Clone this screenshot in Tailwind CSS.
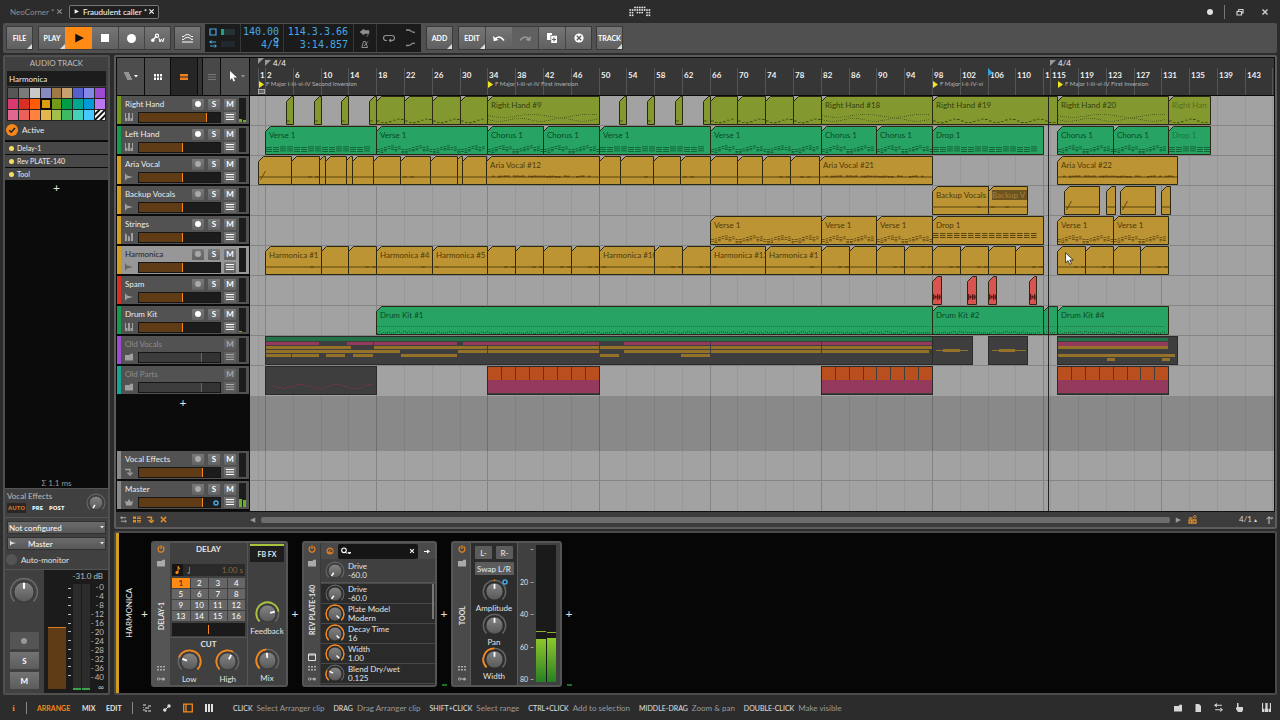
<!DOCTYPE html>
<html lang="en">
<head>
<meta charset="utf-8">
<meta name="viewport" content="width=device-width, initial-scale=1">
<title>Fraudulent caller</title>
<script src="https://cdn.jsdelivr.net/npm/@tailwindcss/browser@4"></script>
</head>
<body class="flex h-screen min-h-[700px] flex-col overflow-hidden bg-[#2c2c2c] font-['Lato',sans-serif] text-[8px] leading-[10px] text-[#e2e2e2]">

<svg class="absolute size-0" aria-hidden="true">
  <defs>
    <linearGradient id="cap" x1="0" y1="0" x2="0" y2="1"><stop offset="0" stop-color="#858585"/><stop offset="1" stop-color="#585858"/></linearGradient>
    <pattern id="hatch" width="4" height="4" patternUnits="userSpaceOnUse" patternTransform="rotate(45)"><rect width="4" height="4" fill="#111"/><rect width="2" height="4" fill="#fff"/></pattern>
  </defs>
  <symbol id="i-x" viewBox="0 0 8 8"><path d="M1.500 1.500 6.500 6.500M6.500 1.500 1.500 6.500" stroke="currentColor" stroke-width="1.400"/></symbol>
  <symbol id="i-play" viewBox="0 0 8 8"><path d="M1 .5 8 4 1 7.500z" fill="currentColor"/></symbol>
  <symbol id="i-wave" viewBox="0 0 8 8"><path d="M0 0 2 2.500 8 4 2 5.500 0 8z" fill="currentColor"/></symbol>
  <symbol id="i-keys" viewBox="0 0 8 8"><path d="M0 0h1v5h1v3H0zM3 0v5h-.5v3h3V5H5V0zM7 0h1v8H6V5h1z" fill="currentColor"/></symbol>
  <symbol id="i-hybrid" viewBox="0 0 8 8"><path d="M0 0 2 2v6H0zM3 2.500 5 4v4H3zM6 0h2v8H6z" fill="currentColor"/></symbol>
  <symbol id="i-folder" viewBox="0 0 8 8"><path d="M0 2h4.500L5.500 .8H8v6.700H0z" fill="currentColor"/></symbol>
  <symbol id="i-crown" viewBox="0 0 8 8"><path d="M0 2.500 2 4 4 1l2 3 2-1.500L7 7.500H1z" fill="currentColor"/></symbol>
  <symbol id="i-return" viewBox="0 0 8 8"><path d="M0 1.500h5v4M2.500 4.500 5 7l2.500-2.500" fill="none" stroke="currentColor" stroke-width="1.300"/></symbol>
  <symbol id="i-power" viewBox="0 0 8 8"><path d="M2.500 1.500a3 3 0 1 0 3 0M4 .3v3.700" fill="none" stroke="currentColor" stroke-width="1.100"/></symbol>
  <symbol id="i-dots" viewBox="0 0 8 6"><path d="M0 1h2v1.500H0zM3 1h2v1.500H3zM6 1h2v1.500H6zM0 4h2v1.500H0zM3 4h2v1.500H3zM6 4h2v1.500H6z" fill="currentColor"/></symbol>
  <symbol id="i-link" viewBox="0 0 8 6"><circle cx="1.600" cy="3" r="1.200" fill="none" stroke="currentColor"/><path d="M3 3h2" stroke="currentColor"/><circle cx="6.400" cy="3" r="1.600" fill="currentColor"/></symbol>
  <symbol id="i-arrows" viewBox="0 0 8 8"><path d="M2.500 0v4L0 2zM5.500 4v4L8 6zM2 1.500h5v1H2zM1 5.500h5v1H1z" fill="currentColor"/></symbol>
  <symbol id="i-menu" viewBox="0 0 8 8"><path d="M0 1h8v1H0zM0 3.500h8v1H0zM0 6h8v1H0z" fill="currentColor"/></symbol>
  <symbol id="i-tri" viewBox="0 0 4 4"><path d="M4 0v4H0z" fill="currentColor"/></symbol>
  <symbol id="i-down" viewBox="0 0 4 3"><path d="M0 0h4L2 2.500z" fill="currentColor"/></symbol>
</svg>

<!-- Project tabs and window controls -->
<header class="flex h-[23px] shrink-0 items-center text-[#8f8f8f]">
  <div class="flex flex-1 items-center">
    <button class="ml-[10px] w-[41px] text-left whitespace-nowrap">NeoCorner *</button>
    <button class="ml-[5px]" aria-label="Close NeoCorner"><svg class="size-[7px]"><use href="#i-x"/></svg></button>
    <div class="ml-[6px] flex h-[14px] w-[90px] items-center rounded-[2px] border border-[#777] bg-[#1f1f1f] text-[#f2f2f2]">
      <svg class="ml-[4px] size-[5px]"><use href="#i-play"/></svg>
      <button class="ml-[4px] w-[62px] text-left font-medium whitespace-nowrap">Fraudulent caller *</button>
      <button class="ml-[3px]" aria-label="Close Fraudulent caller"><svg class="size-[7px]"><use href="#i-x"/></svg></button>
    </div>
  </div>
  <svg class="h-[11px] w-[22px] fill-[#dcdcdc]" viewBox="0 0 22 11" id="logo" aria-label="Bitwig"></svg>
  <div class="flex flex-1 items-center justify-end gap-[11px] text-[#d0d0d0]">
    <span class="size-[6px] rounded-full bg-[#e0e0e0]"></span>
    <span class="h-[14px] w-px bg-[#777]"></span>
    <button aria-label="Restore"><svg class="size-[8px]" viewBox="0 0 8 8"><path d="M2.500 1.500h4.500v3.500H5.500M2.500 1.500v1.500" fill="none" stroke="currentColor" stroke-width="1.200"/><path d="M1 3.500h4.500v3.500H1z" fill="none" stroke="currentColor" stroke-width="1.200"/></svg></button>
    <button class="mr-[11px] ml-[6px]" aria-label="Close"><svg class="size-[8px]"><use href="#i-x"/></svg></button>
  </div>
</header>

<!-- Transport -->
<nav class="mx-[3px] flex h-[30px] shrink-0 items-center rounded-[2px] bg-[#505050] pl-[3px] text-[7px] font-bold text-white">
  <button class="relative h-[24px] w-[27px] border border-[#3a3a3a] bg-linear-to-b from-[#767676] to-[#606060]">FILE<svg class="absolute right-0 bottom-0 size-[5px] text-[#ddd]"><use href="#i-tri"/></svg></button>
  <div class="ml-[5px] flex h-[24px] border border-[#3a3a3a]">
    <button class="relative w-[26px] bg-linear-to-b from-[#767676] to-[#606060]">PLAY<svg class="absolute right-0 bottom-0 size-[5px] text-[#ddd]"><use href="#i-tri"/></svg></button>
    <button class="flex w-[27px] items-center justify-center bg-[#ff8a14] text-[#111]" aria-label="Play"><svg class="size-[10px]"><use href="#i-play"/></svg></button>
    <button class="flex w-[26px] items-center justify-center bg-linear-to-b from-[#767676] to-[#606060]" aria-label="Stop"><span class="size-[8px] bg-white"></span></button>
    <button class="flex w-[26px] items-center justify-center border-l border-[#444] bg-linear-to-b from-[#767676] to-[#606060]" aria-label="Record"><span class="size-[9px] rounded-full bg-white"></span></button>
    <button class="flex w-[26px] items-center justify-center border-l border-[#444] bg-linear-to-b from-[#767676] to-[#606060]" aria-label="Automation write"><svg class="h-[10px] w-[14px]" viewBox="0 0 14 10"><path d="M1.500 7.500 5.500 3" stroke="#fff" stroke-width="1.200"/><circle cx="1.800" cy="7.300" r="1.700" fill="#fff"/><circle cx="6" cy="2.800" r="1.600" fill="none" stroke="#fff" stroke-width="1.200"/><path d="M8 5l1 4 1.400-3L11.800 9l1.200-4" fill="none" stroke="#fff"/></svg></button>
  </div>
  <button class="ml-[3px] flex h-[24px] w-[27px] items-center justify-center border border-[#3a3a3a] bg-linear-to-b from-[#767676] to-[#606060]" aria-label="Overdub"><svg class="h-[9px] w-[11px]" viewBox="0 0 11 9"><path d="M0 2.500h2q1-2 3.500-2t3.500 2h2M0 5.300h2q1-2 3.500-2t3.500 2h2M0 8h11" fill="none" stroke="#fff"/></svg></button>

  <div class="ml-[4px] flex h-[28px] bg-[#1b1b1b] font-['DejaVu_Sans_Mono',monospace] text-[10px] leading-[13px] font-normal text-[#48a8e2]">
    <div class="grid w-[35px] grid-cols-2 items-center gap-y-px py-[2px] pl-[4px]">
      <svg class="size-[8px]" viewBox="0 0 8 8"><path d="M1 1h6v6H1z" fill="none" stroke="currentColor" stroke-width="1.200"/></svg><span class="-ml-[4px] h-[6px] w-[14px] border-l-[3px] border-[#1ba38c] bg-[#233236]"></span>
      <svg class="size-[8px]"><use href="#i-arrows"/></svg><span class="-ml-[4px] h-[6px] w-[14px] bg-[#22292e]"></span>
    </div>
    <div class="flex w-[44px] flex-col items-end border-x border-[#383838] pt-[1px] pr-[4px]"><span>140.00</span><span class="relative">4/4<svg class="absolute -top-[1px] right-0 size-[6px]" viewBox="0 0 6 6"><circle cx="3" cy="3" r="2" fill="#1b1b1b" stroke="currentColor" stroke-width="1.300"/></svg></span></div>
    <div class="flex w-[70px] flex-col items-end border-r border-[#383838] pt-[1px] pr-[5px]"><span>114.3.3.66</span><span>3:14.857</span></div>
    <div class="flex w-[23px] flex-col items-center justify-center gap-[4px] border-r border-[#383838] text-[#8f8f8f]">
      <svg class="h-[8px] w-[10px]" viewBox="0 0 10 8"><path d="M0 3 4 0v1.500h5v3H4V6zM8 4v3M6 7h2" fill="currentColor" stroke="currentColor" stroke-width=".6"/></svg>
      <svg class="h-[7px] w-[8px]" viewBox="0 0 8 7"><path d="M2.500.5h2L6.500 6.500H.8zM3 5 7 .5" fill="none" stroke="currentColor"/></svg>
    </div>
    <div class="flex w-[44px] items-center justify-around text-[#8f8f8f]">
      <svg class="h-[8px] w-[12px]" viewBox="0 0 12 8"><path d="M4 6.500H3a2.500 2.500 0 0 1 0-5h6a2.500 2.500 0 0 1 0 5H6.500M8 5 6.500 6.500 8 8" fill="none" stroke="currentColor" stroke-width="1.200"/></svg>
      <svg class="h-[20px] w-[9px]" viewBox="0 0 9 20"><path d="M0 2h2q2 0 3 1.200T9 4.500M0 17.500h2q2 0 3-1.200t4-1.200" fill="none" stroke="currentColor" stroke-width="1.300"/></svg>
    </div>
  </div>

  <button class="relative ml-[5px] h-[24px] w-[27px] border border-[#3a3a3a] bg-linear-to-b from-[#767676] to-[#606060]">ADD<svg class="absolute right-0 bottom-0 size-[5px] text-[#ddd]"><use href="#i-tri"/></svg></button>
  <div class="ml-[5px] flex h-[24px] border border-[#3a3a3a]">
    <button class="relative w-[26px] bg-linear-to-b from-[#767676] to-[#606060]">EDIT<svg class="absolute right-0 bottom-0 size-[5px] text-[#ddd]"><use href="#i-tri"/></svg></button>
    <button class="flex w-[27px] items-center justify-center border-l border-[#444] bg-linear-to-b from-[#767676] to-[#606060]" aria-label="Undo"><svg class="h-[8px] w-[12px]" viewBox="0 0 12 8"><path d="M2 5.500Q6 0 11 6.500" fill="none" stroke="#fff" stroke-width="1.500"/><path d="M0 2 .8 7.200 5.500 6z" fill="#fff"/></svg></button>
    <button class="flex w-[26px] items-center justify-center bg-[#606060]" aria-label="Redo"><svg class="h-[8px] w-[12px]" viewBox="0 0 12 8"><path d="M10 5.500Q6 0 1 6.500" fill="none" stroke="#999" stroke-width="1.500"/><path d="M12 2 11.200 7.200 6.500 6z" fill="#999"/></svg></button>
    <button class="flex w-[27px] items-center justify-center border-l border-[#444] bg-linear-to-b from-[#767676] to-[#606060]" aria-label="Duplicate"><svg class="size-[10px]" viewBox="0 0 10 10"><path d="M0 0h5v2H3.500v5H0z" fill="#fff"/><path d="M4.200 2.800H10V10H4.200z" fill="#fff"/><path d="M7 4.500v4M5 6.500h4" stroke="#666" stroke-width="1.200"/></svg></button>
    <button class="flex w-[26px] items-center justify-center border-l border-[#444] bg-linear-to-b from-[#767676] to-[#606060]" aria-label="Delete"><svg class="size-[10px]" viewBox="0 0 10 10"><circle cx="5" cy="5" r="4.600" fill="#fff"/><path d="M2.800 2.800l4.400 4.400M7.200 2.800 2.800 7.200" stroke="#555" stroke-width="1.300"/></svg></button>
  </div>
  <button class="relative ml-[4px] flex h-[24px] w-[27px] items-center justify-center border border-[#3a3a3a] bg-linear-to-b from-[#767676] to-[#606060]">TRACK<svg class="absolute right-0 bottom-0 size-[5px] text-[#ddd]"><use href="#i-tri"/></svg></button>
</nav>

<main class="flex min-h-0 flex-1 gap-[4px] px-[3px] py-[2px]">

  <!-- Inspector -->
  <aside class="flex w-[107px] shrink-0 flex-col rounded-[2px] border-2 border-[#505050] bg-[#404040]">
    <h2 class="pt-px text-center text-[#bdbdbd]">AUDIO TRACK</h2>
    <div class="px-[2px] pt-[3px]">
      <input aria-label="Track name" value="Harmonica" class="block h-[15px] w-full bg-[#1c1c1c] px-[2px] text-[#ececec]">
      <div id="palette" class="mt-px grid grid-cols-9 gap-px border border-[#222] bg-[#222]"></div>
    </div>
    <label class="mb-[2px] flex h-[17px] items-center gap-[4px] pl-[1px] text-[#ececec]">
      <span class="relative flex size-[12px]"><input type="checkbox" checked class="size-[12px] appearance-none rounded-full bg-[#f5871b]"><svg class="absolute inset-0 size-[12px]" viewBox="0 0 12 12"><path d="M3.200 6.200 5.200 8.200 9 4" fill="none" stroke="#222" stroke-width="1.600"/></svg></span>Active</label>
    <ul class="flex flex-1 flex-col gap-px border-t-2 border-[#0b0b0b] bg-[#0b0b0b]">
      <li class="flex h-[12px] items-center gap-[3px] bg-[#474747] pl-[4px] text-[7px] font-medium"><i class="size-[5px] rounded-full bg-[#f6dd5d]"></i>Delay-1</li>
      <li class="flex h-[12px] items-center gap-[3px] bg-[#474747] pl-[4px] text-[7px] font-medium"><i class="size-[5px] rounded-full bg-[#f6dd5d]"></i>Rev PLATE-140</li>
      <li class="flex h-[12px] items-center gap-[3px] bg-[#474747] pl-[4px] text-[7px] font-medium"><i class="size-[5px] rounded-full bg-[#f6dd5d]"></i>Tool</li>
      <li class="flex justify-center pt-[2px]"><button aria-label="Add device" class="text-[12px] leading-[10px]">+</button></li>
      <li class="mt-auto text-center text-[#9a9a9a]">Σ 1.1 ms</li>
    </ul>
    <div class="flex h-[30px] justify-between border-y border-[#555] pl-[2px]">
      <div><div class="pt-[2px] text-[#bcbcbc]">Vocal Effects</div>
        <div class="mt-[2px] flex items-center font-['Open_Sans',sans-serif] text-[6px] font-bold text-white"><button class="mr-[3px] bg-[#2c2523] px-px text-[#d77a24]">AUTO</button><button class="px-[3px]">PRE</button><button class="px-[3px]">POST</button></div></div>
      <label data-knob="0,0,-150,#888" class="relative mt-[4px] mr-[2px] size-[20px]"></label>
    </div>
    <div class="flex flex-col gap-[3px] px-[2px] pt-[3px]">
      <label class="relative block"><select aria-label="Input" class="block h-[13px] w-full appearance-none border border-[#303030] bg-linear-to-b from-[#6b6b6b] to-[#585858] pl-px text-white"><option>Not configured</option></select><svg class="absolute top-[5px] right-[2px] h-[3px] w-[4px]"><use href="#i-down"/></svg></label>
      <label class="relative block"><select aria-label="Output" class="block h-[13px] w-full appearance-none border border-[#303030] bg-linear-to-b from-[#6b6b6b] to-[#585858] pl-[20px] text-white"><option>Master</option></select><svg class="absolute top-[3px] left-[3px] size-[6px]"><use href="#i-wave"/></svg><svg class="absolute top-[5px] right-[2px] h-[3px] w-[4px]"><use href="#i-down"/></svg></label>
    </div>
    <label class="flex h-[19px] items-center gap-[4px] pl-[1px] text-[#e2e2e2]"><input type="checkbox" class="size-[11px] appearance-none rounded-full bg-[#555]">Auto-monitor</label>
    <div class="flex h-[124px] border-t border-[#555]">
      <div class="flex w-[42px] flex-col items-center">
        <label data-knob="0,0,0,#888" class="relative mt-[7px] size-[30px]"></label>
        <button aria-label="Record arm" class="mt-[25px] flex h-[17px] w-[29px] items-center justify-center bg-[#555]"><i class="size-[6px] rounded-full bg-[#999]"></i></button>
        <button class="mt-[3px] h-[17px] w-[29px] bg-linear-to-b from-[#737373] to-[#5c5c5c] font-bold text-white">S</button>
        <button class="mt-[3px] h-[17px] w-[29px] bg-linear-to-b from-[#737373] to-[#5c5c5c] font-bold text-white">M</button>
      </div>
      <div class="flex flex-1 flex-col bg-[#1b1b1b] text-[#bcbcbc]">
        <div class="pt-px pr-[5px] text-right">-31.0 dB</div>
        <div class="flex flex-1 pl-[4px]">
          <input type="range" aria-label="Volume" value="60" class="mt-[46px] block h-[62px] w-[18px] appearance-none border-t border-[#d67c22] bg-[#5f3c16] [&::-webkit-slider-thumb]:size-0 [&::-webkit-slider-thumb]:appearance-none">
          <div id="ticks" class="flex h-[95px] w-[5px] flex-col items-end justify-between pt-[7px]"></div>
          <div class="mt-[3px] ml-[2px] flex h-[106px] gap-px"><i class="w-[8px] border-b-2 border-[#38a34a] bg-[#2c2c2c]"></i><i class="w-[8px] border-b-2 border-[#38a34a] bg-[#2c2c2c]"></i></div>
          <div id="scale" class="ml-px flex h-[110px] flex-1 flex-col pt-[2px] pr-[4px] text-right leading-[9px] whitespace-nowrap"></div>
        </div>
      </div>
    </div>
  </aside>

  <div class="flex min-w-0 flex-1 flex-col gap-[2px]">

    <!-- Arranger -->
    <section class="flex min-h-0 flex-1 flex-col rounded-[2px] border-2 border-[#5c5c5c] bg-[#3c3c3c]">
      <div class="flex min-h-0 flex-1 border-b border-[#111]">
        <div class="flex w-[134px] shrink-0 flex-col border-x border-[#0b0b0b] bg-[#0b0b0b]">
          <div class="flex h-[39px] gap-px border-y border-[#0b0b0b] text-[#aaa]">
            <button class="flex w-[27px] items-center justify-center gap-[2px] bg-[#4d4d4d]" aria-label="Track layout"><svg class="h-[9px] w-[8px]" viewBox="0 0 8 9"><path d="M0 1h5M1 3h5M2 5h5M3 7h5" stroke="currentColor" stroke-width="1.700"/></svg><svg class="h-[3px] w-[4px] text-white"><use href="#i-down"/></svg></button>
            <button class="flex w-[25px] items-center justify-center bg-[#4d4d4d] text-white" aria-label="Clip launcher"><svg class="h-[6px] w-[8px]" viewBox="0 0 8 6"><path d="M0 0h2v2.500H0zM3 0h2v2.500H3zM6 0h2v2.500H6zM0 3.500h2V6H0zM3 3.500h2V6H3zM6 3.500h2V6H6z" fill="currentColor"/></svg></button>
            <button class="flex w-[26px] items-center justify-center bg-[#262626]" aria-label="Timeline"><svg class="h-[6px] w-[8px]" viewBox="0 0 8 6"><path d="M0 0h8v2.500H0zM0 3.500h8V6H0z" fill="#f08020"/></svg></button>
            <span class="w-[4px] bg-[#333]"></span>
            <button class="flex w-[17px] items-center justify-center bg-[#484848] text-[#777]" aria-label="Lanes"><svg class="size-[8px]"><use href="#i-menu"/></svg></button>
            <button class="flex flex-1 items-center justify-center gap-[4px] bg-[#4d4d4d] pl-[4px]" aria-label="Pointer tool"><svg class="h-[11px] w-[7px]" viewBox="0 0 7 11"><path d="M0 0v9l2-2 1.500 3.500 1.500-.7L3.600 6.500H7z" fill="#fff"/></svg><svg class="h-[3px] w-[4px] text-[#999]"><use href="#i-down"/></svg></button>
          </div>
          <div id="heads"></div>
          <div class="flex flex-1 justify-center pt-[2px]"><button aria-label="Add track" class="h-[10px] text-[12px] leading-[10px]">+</button></div>
          <div id="fxheads"></div>
        </div>
        <div id="timeline" class="relative flex min-w-0 flex-1 flex-col overflow-hidden border-r border-[#111] bg-[#a2a2a2]">
          <div id="ruler" class="relative h-[39px] shrink-0 border-y border-[#0b0b0b] bg-[#363636] text-[#f0f0f0]"></div>
          <div id="grid" class="absolute inset-x-0 top-[39px] bottom-0"></div>
          <div id="rows" class="relative"></div>
          <div class="relative flex-1 bg-black/15"></div>
          <div class="relative h-[30px] border-b border-[#858585]"></div>
          <div class="h-[30px]"></div>
          <div id="over" class="pointer-events-none absolute inset-x-0 top-[39px] bottom-0"></div>
        </div>
      </div>
      <div class="flex h-[15px] items-center text-[#d88a2c]">
        <div class="flex w-[134px] items-center gap-[6px] pl-[4px]">
          <svg class="size-[7px] text-[#aaa]"><use href="#i-arrows"/></svg>
          <svg class="h-[7px] w-[8px]" viewBox="0 0 8 7"><path d="M0 .5h3v2.500H0zM4 .5h4v1H4zM4 2h4v1H4zM0 4h3v2.500H0zM4 4h4v1H4zM4 5.500h4v1H4z" fill="currentColor"/></svg>
          <svg class="size-[7px]" viewBox="0 0 8 8"><path d="M0 1.500h5v4M2 4.500 5 7.500l3-3" fill="none" stroke="currentColor" stroke-width="1.800"/></svg>
          <svg class="size-[7px]" viewBox="0 0 8 8"><path d="M1 1 7 7M7 1 1 7" stroke="currentColor" stroke-width="1.800"/></svg>
        </div>
        <svg class="size-[6px] rotate-180 text-[#999]"><use href="#i-play"/></svg>
        <div class="mx-[5px] h-[6px] flex-1 rounded-[2px] bg-[#6c6c6c]"></div>
        <svg class="size-[6px] text-[#999]"><use href="#i-play"/></svg>
        <svg class="ml-[7px] size-[9px]" viewBox="0 0 9 9"><path d="M1 3h3.500M1 5h2.500v3H1zM5 5h3v3H5z" fill="none" stroke="currentColor" stroke-width="1.300"/><circle cx="6.800" cy="1.800" r="1.300" fill="none" stroke="currentColor"/></svg>
        <button class="ml-[42px] text-[#d5d5d5]">4/1 <span class="text-[6px]">▴</span></button>
        <svg class="mr-[2px] ml-[8px] size-[8px] text-[#ccc]" viewBox="0 0 8 8"><path d="M4 8V1M1.500 3 4 .8 6.500 3M6 2h2" fill="none" stroke="currentColor"/></svg>
      </div>
    </section>

    <!-- Device chain -->
    <section class="flex h-[164px] shrink-0 items-start rounded-[2px] border-2 border-[#4a4a4a] bg-[#060606]">
      <div class="flex h-full w-[22px] items-center justify-center border-l-[3px] border-[#d39d22]"><h2 class="rotate-180 text-[8px] font-medium [writing-mode:vertical-rl]">HARMONICA</h2></div>
      <button aria-label="Insert device" class="mt-[75px] w-[13px] text-[12px] leading-[12px]">+</button>

      <article class="mt-[8px] flex h-[146px] w-[137px] gap-px rounded-[3px] border-2 border-[#555] bg-[#555]">
        <div data-strip="DELAY-1" class="flex w-[16px] flex-col items-center"></div>
        <div class="flex w-[77px] flex-col gap-px">
          <div class="flex-1 bg-[#404040] px-[2px]">
            <h3 class="pt-px text-center font-bold">DELAY</h3>
            <div class="mt-[10px] flex h-[12px] items-center bg-[#2a2a2a]"><button aria-label="Beat sync" class="flex h-full w-[11px] items-center justify-center bg-[#161616] text-[#ff8a14]"><svg class="h-[8px] w-[6px]" viewBox="0 0 6 8"><path d="M2.600 0h1c.2 1.600 2 1.700 1.600 4-.3-.9-.8-1.200-1.600-1.400V6.500A1.600 1.400 0 1 1 2.600 5.200z" fill="currentColor"/></svg></button><svg class="ml-[4px] h-[7px] w-[3px] text-[#777]" viewBox="0 0 3 7"><path d="M2 0h1v6A1.300 1 0 1 1 2 5z" fill="currentColor"/></svg><span class="flex-1 pr-[2px] text-right text-[#85683c]">1.00 s</span></div>
            <div id="steps" class="mt-[2px] grid grid-cols-4 gap-px"></div>
            <div class="mt-[2px] flex h-[13px] items-center justify-center bg-[#1a1a1a]"><i class="h-[9px] w-px bg-[#f5871b]"></i></div>
          </div>
          <div class="h-[47px] bg-[#404040]">
            <h3 class="pt-px text-center font-bold">CUT</h3>
            <div class="flex justify-around text-center">
              <div class="w-[30px]"><label data-knob="-70,135,-70,#f5871b" class="relative mx-auto block size-[25px]"></label><span class="block">Low</span></div>
              <div class="w-[30px]"><label data-knob="-135,30,30,#f5871b" class="relative mx-auto block size-[25px]"></label><span class="block">High</span></div>
            </div>
          </div>
        </div>
        <div class="flex flex-1 flex-col items-center bg-[#404040]">
          <button class="mt-px h-[18px] w-[34px] border-t-2 border-[#a8c43c] bg-[#1d1d1d] text-[7px] font-bold whitespace-nowrap">FB FX</button>
          <label data-knob="-135,80,76,#a8c43c" class="relative mt-[39px] size-[25px]"></label><span>Feedback</span>
          <label data-knob="-135,-5,-5,#f5871b" class="relative mt-[12px] size-[25px]"></label><span>Mix</span>
        </div>
      </article>
      <button aria-label="Insert device" class="mt-[75px] w-[14px] text-[12px] leading-[12px]">+</button>

      <article class="mt-[8px] flex h-[146px] w-[135px] rounded-[3px] border-2 border-[#555] bg-[#4a4a4a]">
        <div data-strip="REV PLATE-140" class="flex w-[17px] flex-col items-center border-r border-[#3a3a3a]"></div>
        <div class="flex flex-1 flex-col">
          <div class="flex h-[16px] items-center">
            <svg class="ml-[5px] size-[8px]" viewBox="0 0 8 8"><circle cx="4" cy="4" r="3.500" fill="#d27a2a"/><path d="M2.500 4.500a1.700 1.700 0 1 1 3.200.5L4 4" fill="none" stroke="#333"/></svg>
            <label class="ml-[4px] flex h-[15px] flex-1 items-center rounded-[2px] bg-[#151515]"><svg class="ml-[3px] h-[8px] w-[10px] text-white" viewBox="0 0 10 8"><circle cx="3" cy="3.300" r="2.300" fill="none" stroke="currentColor" stroke-width="1.100"/><path d="M4.600 5 6.300 7M7 5.500h3L8.500 7z" stroke="currentColor" stroke-width=".8" fill="currentColor"/></svg><input aria-label="Search parameters" class="h-[12px] w-[50px] flex-1 bg-transparent px-[3px] outline-none"><svg class="mr-[3px] size-[6px] text-white"><use href="#i-x"/></svg></label>
            <button aria-label="Next" class="flex w-[17px] justify-center"><svg class="h-[5px] w-[6px]" viewBox="0 0 6 5"><path d="M0 2h3V.5L6 2.500 3 4.500V3H0z" fill="#fff"/></svg></button>
          </div>
          <div id="pinned" class="flex h-[24px] items-center border-b border-[#555] bg-[#404040]"></div>
          <div id="params" class="relative mt-px flex-1 overflow-hidden bg-[#2a2a2a]"></div>
        </div>
      </article>
      <button aria-label="Insert device" class="relative mt-[75px] w-[14px] text-[12px] leading-[12px]">+<i class="absolute top-[76px] left-[5px] h-[2px] w-[5px] bg-[#1f6e2a]"></i></button>

      <article class="mt-[8px] flex h-[146px] w-[111px] rounded-[3px] border-2 border-[#555] bg-[#4a4a4a]">
        <div data-strip="TOOL" class="flex w-[17px] flex-col items-center"></div>
        <div class="flex w-[48px] flex-col items-center border-x border-[#5a5a5a] bg-[#2c2c2c]">
          <div class="mt-[3px] flex w-[38px] justify-between"><button class="h-[13px] w-[17px] rounded-[1px] bg-[#5c5c5c] font-medium">L-</button><button class="h-[13px] w-[17px] rounded-[1px] bg-[#5c5c5c] font-medium">R-</button></div>
          <button class="mt-[3px] h-[13px] w-[39px] rounded-[1px] bg-[#5c5c5c] font-medium whitespace-nowrap">Swap L/R</button>
          <label data-knob="-3,3,0,#f5871b" class="relative mt-[4px] size-[25px]"><svg class="absolute top-0 -right-px size-[6px]" viewBox="0 0 6 6"><circle cx="3" cy="3" r="2" fill="#223" stroke="#48a8e2" stroke-width="1.500"/></svg></label><span class="leading-[9px]">Amplitude</span>
          <label data-knob="0,0,0,#888" class="relative size-[25px]"></label><span class="leading-[9px]">Pan</span>
          <label data-knob="-135,0,0,#f5871b" class="relative size-[25px]"></label><span class="leading-[9px]">Width</span>
        </div>
        <div class="flex flex-1 bg-[#404040]">
          <div class="flex w-[18px] flex-col justify-between py-px pr-[2px] text-right text-[7px]"><span>–</span><span>20 –</span><span>40 –</span><span>60 –</span><span>80 –</span></div>
          <div class="mt-[2px] flex h-[137px] w-[20px] items-end gap-px bg-[#1a1a1a]"><i class="flex h-[51px] flex-1 items-end border-t border-[#8ab32a]"><b class="h-[43px] w-full bg-linear-to-b from-[#8dc92c] to-[#258023]"></b></i><i class="flex h-[50px] flex-1 items-end border-t border-[#8ab32a]"><b class="h-[44px] w-full bg-linear-to-b from-[#8dc92c] to-[#258023]"></b></i></div>
        </div>
      </article>
      <button aria-label="Insert device" class="relative mt-[75px] w-[14px] text-[12px] leading-[12px]">+<i class="absolute top-[76px] left-[5px] h-[2px] w-[5px] bg-[#1f6e2a]"></i></button>
    </section>
  </div>
</main>

<!-- Status bar -->
<footer class="flex h-[23px] shrink-0 items-center pb-[2px] whitespace-nowrap text-[#e0e0e0]">
  <button aria-label="Info" class="ml-[11px] w-[5px] font-['Liberation_Serif',serif] text-[9px] font-bold text-[#f5871b]">i</button>
  <i class="ml-[10px] h-[12px] w-px bg-[#888]"></i>
  <button class="ml-[10px] w-[35px] text-left text-[7px] font-bold text-[#f5871b]">ARRANGE</button>
  <button class="ml-[10px] w-[14px] text-left text-[7px] font-bold">MIX</button>
  <button class="ml-[10px] w-[16px] text-left text-[7px] font-bold">EDIT</button>
  <i class="ml-[10px] h-[12px] w-px bg-[#888]"></i>
  <div class="ml-[10px] flex w-[70px] items-center justify-between">
    <svg class="size-[8px]" viewBox="0 0 8 8"><path d="M0 1h3M5 2h3M2 4h4M0 6h2M5 7h3M0 3v1M3 6v2" stroke="currentColor" stroke-width="1.200"/></svg>
    <svg class="size-[8px]" viewBox="0 0 8 8"><path d="M1.500 6.500 6 2" stroke="currentColor"/><circle cx="1.800" cy="6" r="1.700" fill="currentColor"/><circle cx="6" cy="2" r="1.700" fill="currentColor"/></svg>
    <svg class="size-[10px] text-[#f5871b]" viewBox="0 0 10 10"><path d="M.7 1.200h8.600v7.600H.7zM3 1v8" fill="none" stroke="currentColor" stroke-width="1.300"/></svg>
    <svg class="size-[8px]" viewBox="0 0 8 8"><path d="M0 0h2v8H0zM3 0h2v8H3zM6 0h2v8H6z" fill="currentColor"/></svg>
  </div>
  <dl id="hints" class="ml-[20px] flex flex-1 gap-[9px]"></dl>
  <div class="flex items-center gap-[12px] pr-[9px] text-[#d5d5d5]">
    <svg class="size-[8px]"><use href="#i-folder"/></svg>
    <svg class="size-[8px]" viewBox="0 0 8 8"><path d="M1.500 0h3.500L7 2v6H1.500z" fill="currentColor"/></svg>
    <svg class="size-[9px]"><use href="#i-arrows"/></svg>
    <svg class="size-[9px]" viewBox="0 0 9 9"><path d="M2 0h1.500v4h4.500v3L7 9H3L1 6V4.500h1z" fill="currentColor"/></svg>
    <svg class="ml-[6px] size-[9px]"><use href="#i-keys"/></svg>
  </div>
</footer>

<script>
const $ = id => document.getElementById(id);

// Logo dot matrix
$('logo').innerHTML = ['..xxxxx..', 'xxxxxxxxx', 'xx.xxx.xx', 'xx.....xx'].map((r, y) =>
  [...r].map((c, x) => c === 'x' ? `<circle cx="${x * 2.4 + 1.2}" cy="${y * 2.6 + 1.4}" r=".95"/>` : '').join('')).join('');

// Colour palette
const swatches = '#565656 #7b7b7b #c9c9c9 #868abf #a07843 #c8a070 #5560cc #8489e8 #9c4bd0 #d93870 #d92e24 #ff5a06 #d99d10 #73981a #009d47 #00a68f #0099d9 #bc76f0 #e16692 #ec6157 #ff833e #e4b74e #a0c04b #3ebb62 #43d2b9 #44c8ff'.split(' ');
$('palette').innerHTML = swatches.map((c, i) => `<button aria-label="Colour ${i + 1}" class="h-[10px] ${i === 12 ? 'outline-2 outline-[#0b0b0b] -outline-offset-1' : ''}" style="background:${c}"></button>`).join('') +
  '<button aria-label="Default colour" class="h-[10px]"><svg class="block h-full w-full"><rect width="100%" height="100%" fill="url(#hatch)"/></svg></button>';

// Mixer scale
$('scale').innerHTML = ['0', 4, 8, 12, 16, 20, 24, 28, 32, 36, 40].map(n => `<span>-&#8201;${n}</span>`).join('') + '<span class="mt-px">∞</span>';
$('ticks').innerHTML = '<i class="h-px w-[3px] bg-[#bcbcbc]"></i>'.repeat(11);

$('steps').innerHTML = Array.from({ length: 16 }, (_, i) => `<button class="h-[10px] ${i ? 'bg-[#666] text-white' : 'bg-[#ff8a14] text-[#222]'}">${i + 1}</button>`).join('');

$('hints').innerHTML = [['CLICK', 'Select Arranger clip'], ['DRAG', 'Drag Arranger clip'], ['SHIFT+CLICK', 'Select range'], ['CTRL+CLICK', 'Add to selection'], ['MIDDLE-DRAG', 'Zoom & pan'], ['DOUBLE-CLICK', 'Make visible']]
  .map(([k, v]) => `<div class="flex gap-[4px]"><dt class="text-[7px]">${k}</dt><dd class="text-[#9a9a9a]">${v.replace('&', '&amp;')}</dd></div>`).join('');

// Device parameter list
const param = (n, v, k) => `<label data-knob="${k}" class="relative ml-[4px] size-[20px] shrink-0"></label><div class="ml-[3px] leading-[9px]"><div>${n}</div><div>${v}</div></div>`;
$('pinned').innerHTML = param('Drive', '-60.0', '0,0,-145,#888');
$('params').innerHTML = [['Drive', '-60.0', '0,0,-145,#888'], ['Plate Model', 'Modern', '-135,135,135,#f5871b'], ['Decay Time', '16', '-135,135,135,#f5871b'], ['Width', '1.00', '-135,135,135,#f5871b'], ['Blend Dry/wet', '0.125', '-135,-65,-65,#f5871b']]
  .map(p => `<div class="flex h-[20px] items-center border-b border-[#484848]">${param(...p)}</div>`).join('') + '<i class="absolute top-0 right-px h-[35px] w-[2px] bg-[#777]"></i>';

// Device side strips
document.querySelectorAll('[data-strip]').forEach(el => {
  const n = el.dataset.strip;
  el.innerHTML = `<button aria-label="Power" class="mt-[2px] text-[#f5871b]"><svg class="size-[8px]"><use href="#i-power"/></svg></button>
    <svg class="mt-[6px] size-[8px] shrink-0 text-[#aaa]"><use href="#i-folder"/></svg>
    <h3 class="flex flex-1 rotate-180 items-center justify-center text-[7px] font-bold whitespace-nowrap [writing-mode:vertical-rl]"><span>${n}</span></h3>
    ${n.startsWith('REV') ? '<svg class="mb-[4px] size-[8px] shrink-0" viewBox="0 0 8 8"><path d="M.5 1h7v6.500h-7zM.5 2h7" fill="none" stroke="currentColor"/></svg>' : ''}
    <svg class="h-[6px] w-[8px] shrink-0 text-[#aaa]"><use href="#i-dots"/></svg><svg class="mt-[5px] mb-[3px] h-[6px] w-[8px] shrink-0 text-[#aaa]"><use href="#i-link"/></svg>`;
});

// Rotary controls: "arc start, arc end, pointer angle, colour"
const pt = (a, r) => { const t = a * Math.PI / 180; return `${(14 + r * Math.sin(t)).toFixed(2)} ${(14 - r * Math.cos(t)).toFixed(2)}`; };
const arc = (a, b, r) => `M${pt(a, r)}A${r} ${r} 0 ${b - a > 180 ? 1 : 0} 1 ${pt(b, r)}`;
document.querySelectorAll('[data-knob]').forEach((el, i) => {
  const [a, b, p, c] = el.dataset.knob.split(',').map((v, k) => k < 3 ? +v : v);
  el.insertAdjacentHTML('afterbegin', `<svg class="absolute inset-0 size-full" viewBox="0 0 28 28" fill="none">
    <path d="${arc(-135, 135, 12.5)}" stroke="#666" stroke-width="1.600"/>${a < b ? `<path d="${arc(a, b, 12.5)}" stroke="${c}" stroke-width="2"/>` : ''}
    <circle cx="14" cy="14" r="9.500" fill="url(#cap)" stroke="#2e2e2e" stroke-width=".8"/><path d="M${pt(p, 3)}L${pt(p, 8.500)}" stroke="#fff" stroke-width="2"/></svg>
    <input type="range" aria-label="Control ${i + 1}" class="absolute inset-0 size-full opacity-0">`);
});

// Track headers
const gold = '#d39d22', mini = 'flex h-[11px] w-[12px] items-center justify-center rounded-[1px] bg-linear-to-b from-[#787878] to-[#626262] font-bold text-white';
const head = ([name, color, icon, vol, rec, mode, meter]) => {
  const off = mode === 'off', sel = mode === 'sel';
  const fader = off ? '#3c3c3c' : '#5f3c16', dark = off ? '#333' : '#1c1c1c';
  return `<div class="flex h-[30px] border-b-2 border-[#0b0b0b] ${sel ? 'bg-[#979797]' : 'bg-[#525252]'}">
    <i class="w-[4px]" style="background:${color}"></i>
    <div class="flex flex-1 flex-col gap-px pt-[2px] pl-[4px]">
      <div class="flex h-[12px] items-center gap-[4px]"><span class="flex-1 ${off ? 'text-[#8c8c8c]' : sel ? 'text-[#222]' : 'text-[#ececec]'}">${name}</span>
        ${off ? '' : `<button aria-label="Arm ${name}" class="${mini}"><i class="size-[6px] rounded-full ${rec ? 'bg-white' : 'bg-[#a9a9a9]'}"></i></button><button aria-label="Solo ${name}" class="${mini}">S</button>`}
        <button aria-label="Mute ${name}" class="${mini} ${off ? 'opacity-50' : ''}">M</button></div>
      <div class="flex h-[12px] items-center"><svg class="size-[8px] ${sel ? 'text-[#666]' : 'text-[#a0a0a0]'}"><use href="#i-${icon}"/></svg>
        <span class="relative ml-[5px] flex flex-1"><input type="range" aria-label="${name} volume" value="${vol}" class="h-[11px] w-full appearance-none border border-[#161616] [&::-webkit-slider-thumb]:h-[9px] [&::-webkit-slider-thumb]:w-px [&::-webkit-slider-thumb]:appearance-none ${off ? '[&::-webkit-slider-thumb]:bg-[#666]' : '[&::-webkit-slider-thumb]:bg-[#f5871b]'}" style="background:linear-gradient(to right,${fader} ${vol}%,${dark} ${vol}%)">${name === 'Master' ? '<svg class="absolute top-[3px] right-[2px] size-[6px]" viewBox="0 0 6 6"><circle cx="3" cy="3" r="2" fill="none" stroke="#48a8e2" stroke-width="1.500"/></svg>' : ''}</span>
        <button aria-label="${name} lanes" class="${mini} ml-[3px] ${off ? 'opacity-50' : ''}"><svg class="size-[8px]"><use href="#i-menu"/></svg></button></div>
    </div>
    <div class="mx-[3px] my-[2px] flex w-[7px] items-end gap-px bg-[#1c1c1c]">${meter ? `<i class="flex-1 bg-[#6aae2a]" style="height:${meter}px"></i><i class="flex-1 bg-[#6aae2a]" style="height:${meter - 1}px"></i>` : ''}</div></div>`;
};
$('heads').innerHTML = [
  ['Right Hand', '#73981a', 'keys', 84, 1, '', 3], ['Left Hand', '#159a50', 'keys', 54, 1], ['Aria Vocal', gold, 'wave', 54], ['Backup Vocals', gold, 'wave', 54],
  ['Strings', gold, 'hybrid', 54, 1], ['Harmonica', gold, 'wave', 54, 0, 'sel'], ['Spam', '#d92e24', 'wave', 54], ['Drum Kit', '#159a50', 'keys', 54, 1, '', 1],
  ['Old Vocals', '#9c4bd0', 'folder', 78, 0, 'off'], ['Old Parts', '#16a692', 'folder', 78, 0, 'off']].map(head).join('');
$('fxheads').innerHTML = [['Vocal Effects', '#8a8a8a', 'return', 79], ['Master', '#8a8a8a', 'crown', 79, 0, '', 8]].map(head).join('');

// Bars to pixels
const X = bar => Math.round(15 + (bar - 2) * 6.948);

// Ruler and grid
const bars = []; for (let b = 2; b <= 114; b += 4) bars.push(b); for (let b = 115; b <= 147; b += 4) bars.push(b);
$('ruler').innerHTML = [1, ...bars].map(b => `<i class="absolute top-[10px] bottom-0 w-px bg-[#555]" style="left:${X(b)}px"></i><span class="absolute top-[12px] font-bold" style="left:${X(b) + 2}px">${b === 114 ? 1 : b}</span>`).join('') +
  [[1, 'F Major I-iii-vi-IV Second Inversion'], [34, 'F Major I-iii-vi-IV First inversion'], [98, 'F Major I-ii-IV-vi'], [116, 'F Major I-iii-vi-IV First Inversion']]
    .map(([b, t]) => `<span class="absolute top-[21px] flex items-center gap-[2px] text-[6px] whitespace-nowrap text-[#b4b4b4]" style="left:${X(b) + 1}px"><svg class="h-[7px] w-[5px]" viewBox="0 0 5 7"><path d="M0 0 5 3.500 0 7z" fill="#f3e51c"/></svg>${t}</span>`).join('') +
  [[1, ''], [2, '4/4'], [115, '4/4']].map(([b, t]) => `<span class="absolute top-0 flex items-center gap-[2px]" style="left:${X(b)}px"><svg class="size-[6px]" viewBox="0 0 6 6"><path d="M0 0h6L0 6z" fill="#999"/></svg>${t}</span>`).join('') +
  `<i class="absolute top-[31px] h-[5px] w-[7px] border border-[#aaa] bg-[#666]" style="left:${X(1)}px"></i><svg class="absolute top-[10px] h-[8px] w-[5px]" style="left:${X(106)}px" viewBox="0 0 5 8"><path d="M0 0 5 5 0 8z" fill="#2f9fe0"/></svg>`;
$('grid').innerHTML = [1, ...bars].map(b => `<i class="absolute inset-y-0 w-px ${(b - 2) % 16 && b !== 131 ? 'bg-[#979797]' : 'bg-[#838383]'}" style="left:${X(b)}px"></i>`).join('');

// Clip thumbnails
const rnd = n => { const v = Math.sin(n * 12.9898) * 43758.5453; return v - Math.floor(v); };
const rect = (x, y, w, h) => `M${x} ${y}h${w}v${h}h${-w}z`;
const art = {
  line: w => rect(0, 20.500, w, 1) + Array.from({ length: Math.floor(w / 7) }, (_, i) => rnd(i + w) > .7 ? rect(i * 7 + 3, 20.3, 4, 1.4) : '').join(''),
  vox: w => rect(0, 20.500, w, 1) + Array.from({ length: Math.floor(w / 3) - 2 }, (_, i) => rnd(i) > .3 ? rect(i * 3 + 3, 20 - rnd(i + 5) * .5, 2.500, 1.8) : '').join(''),
  tune: w => Array.from({ length: Math.floor(w / 4) }, (_, i) => rect(i * 4 + 1, (24.500 + Math.sin(i * .9) * 1.8).toFixed(1), 2.600, .9)).join(''),
  wave: w => Array.from({ length: Math.floor(w / 2) - 1 }, (_, i) => rect(i * 2 + 1, (19.500 + Math.sin(i * .22) * 1.500).toFixed(1), 1, .6) + rect(i * 2 + 1, (23.5 + Math.sin(i * .3) * 1.500).toFixed(1), 1, .6)).join(''),
  long: w => Array.from({ length: Math.floor(w / 7) }, (_, i) => [0, 1, 2].map(k => rect(i * 7 + 1, 21 + k * 2 + (i % 4 > 1 ? -.6 : 0), 6, .8)).join('')).join(''),
  chord: w => Array.from({ length: Math.floor(w / 3.500) }, (_, i) => { const y = [23, 22.500, 21, 20, 19.5, 21, 20.500, 23][i % 8]; return rect(i * 3.500 + 1, y, 2.800, .8) + rect(i * 3.500 + 1, y + 2, 2.800, .8) + (i % 3 ? rect(i * 3.500 + 1, y + 3.500, 2.800, .8) : ''); }).join(''),
  block: w => Array.from({ length: Math.floor(w / 7) }, (_, i) => [0, 2, 4].map(k => rect(i * 7 + 1, 17 + k, 5.500, .9)).join('')).join(''),
  drum: w => Array.from({ length: Math.floor(w / 2) - 1 }, (_, i) => rect(i * 2 + 1, 20, 1, .6) + rect(i * 2 + 1, 27 - 2 * rnd(i), .8, 1.200)).join(''),
  spam: w => rect(0, 20.500, w, 1) + Array.from({ length: Math.floor(w / 2) }, (_, i) => rect(i * 2 + 1, 18 + rnd(i) * 1.500, 1.300, 6 - rnd(i) * 3)).join(''),
  fade: w => rect(0, 20.500, w, 1) + 'M2 24l5-9h.9l-5 9z'
};
const clip = (fill, ink, [a, b, label, kind, dim]) => {
  const x = X(a), w = X(b) - x + 1, c = Math.min(5, w - 3);
  return `<button class="absolute top-0 h-[29px] text-left" style="left:${x}px;width:${w}px" aria-label="${label || 'clip'}">
    <svg class="absolute inset-0 size-full" viewBox="0 0 ${w} 29"><path d="M.5 ${c + .5}L${c + .5} .5H${w - .5}V28.500H.5z" fill="${fill}" stroke="#2a2713"/><path d="${(art[kind] || art.line)(w - 1)}" fill="${ink}" opacity=".9"/></svg>
    ${label ? `<span class="absolute top-[4px] right-px left-[4px] overflow-hidden whitespace-nowrap ${dim === 2 ? 'bg-[#6d5320] text-[#a4853c]' : ''}" style="${dim === 2 ? '' : `color:${ink};opacity:${dim ? .5 : 1}`}">${label}</span>` : ''}</button>`;
};
const runs = (list, kind) => list.slice(1).map((b, i) => [list[i], b, '', kind]);
const rh = ['#83992f', '#343f0c'], gr = ['#27a463', '#0b4826'], go = ['#bd9433', '#4f3a0a'];
const tracks = [
  [rh, [...[5, 9, 13, 17, 53, 57, 61, 65].map(b => [b, b + 1, '', 'tune']), ...runs([18, 22, 26, 30, 34], 'tune'), [34, 50, 'Right Hand #9', 'wave'], ...runs([66, 70, 74, 78, 82], 'tune'), [82, 98, 'Right Hand #18', 'wave'], [98, 116, 'Right Hand #19', 'tune'], [116, 132, 'Right Hand #20', 'wave'], [132, 138, 'Right Han', 'tune', 1]]],
  [gr, [[2, 18, 'Verse 1', 'long'], [18, 34, 'Verse 1', 'chord'], [34, 42, 'Chorus 1', 'chord'], [42, 50, 'Chorus 1', 'chord'], [50, 66, 'Verse 1', 'long'], [66, 82, 'Verse 1', 'chord'], [82, 90, 'Chorus 1', 'chord'], [90, 98, 'Chorus 1', 'chord'], [98, 114, 'Drop 1', 'long'], [116, 124, 'Chorus 1', 'chord'], [124, 132, 'Chorus 1', 'chord'], [132, 138, 'Drop 1', 'long', 1]]],
  [go, [[1, 5.8, '', 'fade'], ...runs([5.8, 9.8, 10.6, 13.7, 14.5, 17.6, 21.5, 25.8, 29.7, 30.3, 33.8]), [33.8, 50, 'Aria Vocal #12', 'vox'], ...runs([50, 53.1, 57.8, 61.8, 66, 70, 73.6, 77.5, 81.8]), [81.8, 98, 'Aria Vocal #21', 'vox'], [116, 133.3, 'Aria Vocal #22', 'vox']]],
  [go, [[98, 106, 'Backup Vocals'], [106, 111.7, 'Backup V', 'line', 2], [117, 122.1, '', 'fade'], [123.1, 124.4], [125.1, 130.1, '', 'fade'], [131, 132.3]]],
  [go, [[66, 82, 'Verse 1', 'chord'], [82, 90, 'Verse 1', 'chord'], [90, 98, 'Verse 1', 'chord'], [98, 114, 'Drop 1', 'block'], [116, 124, 'Verse 1', 'chord'], [124, 132, 'Verse 1', 'chord']]],
  [go, [[2, 10, 'Harmonica #1'], ...runs([10, 14, 18]), [18, 26, 'Harmonica #4'], [26, 34, 'Harmonica #5'], ...runs([34, 38, 42, 46, 50]), [50, 58, 'Harmonica #10'], ...runs([58, 62, 66]), [66, 74, 'Harmonica #13'], [74, 82, 'Harmonica #1'], ...runs([82, 86, 90, 94, 98, 102, 106, 110, 114]), ...runs([116, 120, 124, 128, 132])]],
  [['#d95350', '#4d1512'], [[98, 99.3, '', 'spam'], [103, 104.3, '', 'spam'], [106, 107.2, '', 'spam'], [112, 113, '', 'spam']]],
  [gr, [[18, 98, 'Drum Kit #1', 'drum'], [98, 114, 'Drum Kit #2', 'drum'], [114, 116, '', 'drum'], [116, 132, 'Drum Kit #4', 'drum']]]
];

// Collapsed folder lanes: [bar start, bar end, y, height, colour]
const folder = (a, b, lanes) => {
  const x = X(a), w = X(b) - x + 1;
  return `<svg class="absolute top-0 h-[29px]" style="left:${x}px;width:${w}px" viewBox="0 0 ${w} 29"><rect x=".5" y=".5" width="${w - 1}" height="28" fill="#3e3e3e" stroke="#2a2a2a"/>` +
    lanes.map(([s, e, y, h, c]) => `<rect x="${X(s) - x + 1}" y="${y}" width="${X(e) - X(s) - 1}" height="${h}" fill="${c}"/>`).join('') + '</svg>';
};
const G = '#227347', P = '#943a5c', Y = '#94722a', O = '#b94f1c';
const vocals = folder(2, 98, [[2, 98, 1, 4, G], [2, 9.8, 6, 3, P], [13.6, 17.5, 6, 3, P], [17.5, 29.7, 6, 3, P], [30.3, 50, 6, 3, P], [53.5, 66, 6, 3, P], [66, 82, 6, 3, P], [82, 98, 6, 3, P],
  [2, 14.4, 10, 3, Y], [17.5, 34, 10, 3, Y], [34, 50, 10, 3, Y], [50, 66, 10, 3, Y], [66, 82, 10, 3, Y], [82, 98, 10, 3, Y],
  [2, 21.5, 14, 3, Y], [29.7, 34, 14, 3, Y], [34, 50, 14, 3, Y], [53.5, 66, 14, 3, Y], [66, 82, 14, 3, Y], [82, 97.6, 14, 3, Y],
  [2, 5.8, 18, 3, Y], [5.8, 9.8, 18, 3, Y], [10.6, 13.5, 18, 3, Y], [14.5, 17.5, 18, 3, Y], [21.5, 29.7, 18, 3, Y], [50, 53, 18, 3, Y], [61.800, 66, 18, 3, Y]]) +
  folder(98, 103.7, [[98.5, 103.2, 14, 1, Y], [99.5, 102, 13, 3, Y]]) + folder(106, 111.7, [[106.5, 111.5, 14, 1, Y], [107.5, 110, 13, 3, Y]]) +
  folder(116, 133.3, [[116, 132, 2, 3, G], [116, 132, 6, 4, P], [116, 132, 10, 3, Y], [116, 133, 18, 3, Y], [123, 124.4, 22, 3, Y], [131, 132.3, 22, 3, Y]]);
const bank = a => folder(a, a + 16, [...Array.from({ length: 8 }, (_, i) => [a + i * 2, a + i * 2 + 2, 1, 13, O]), [a, a + 16, 14, 13, P]]);
const parts = folder(2, 18, Array.from({ length: 22 }, (_, i) => [3 + i * .65, 3.7 + i * .65, Math.round(20 + Math.sin(i * .8) * 2), 1, '#6d3346'])) + bank(34) + bank(82) + bank(116);
$('rows').innerHTML = [...tracks.map(([[f, k], cs]) => cs.map(c => clip(f, k, c)).join('')), vocals, parts].map((h, i) => `<div class="relative h-[30px] ${i < 9 ? 'border-b border-[#858585]' : ''}">${h}</div>`).join('');

// Playhead and pointer
$('over').innerHTML = `<i class="absolute inset-y-0 w-px bg-[#222]" style="left:${X(114.7)}px"></i><svg class="absolute top-[156px] h-[13px] w-[9px]" style="left:${X(117.2)}px" viewBox="0 0 9 13"><path d="M.5.8v10L3 8.600l1.700 3.800 1.800-.8L4.800 8H8.300z" fill="#fff" stroke="#222" stroke-width=".8"/></svg>`;
</script>
</body>
</html>
